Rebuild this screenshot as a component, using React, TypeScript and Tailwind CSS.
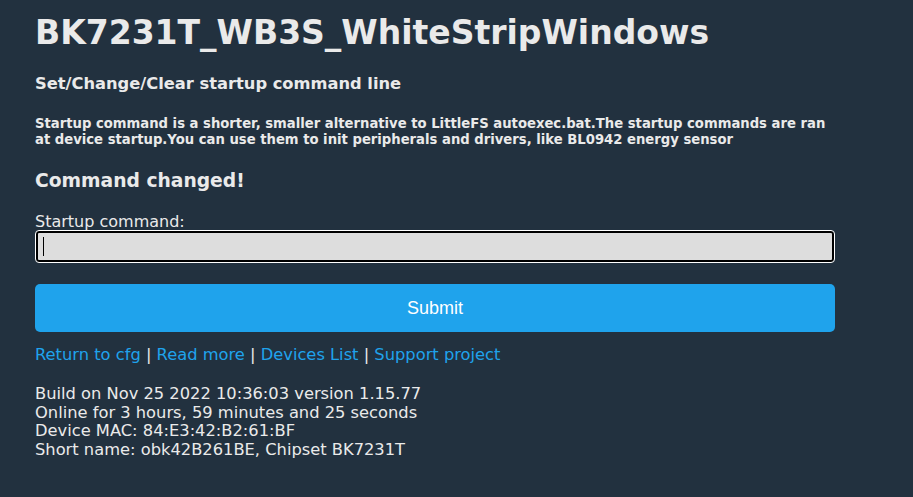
import React from "react";

const links = ["Return to cfg", "Read more", "Devices List", "Support project"];

const info = [
  "Build on Nov 25 2022 10:36:03 version 1.15.77",
  "Online for 3 hours, 59 minutes and 25 seconds",
  "Device MAC: 84:E3:42:B2:61:BF",
  "Short name: obk42B261BE, Chipset BK7231T",
];

export default function App() {
  return (
    <div className="min-h-[497px] w-full bg-[#22313f] text-[#eaeaea] font-['DejaVu_Sans',Verdana,sans-serif]">
      <div className="ml-[35px] w-[800px] pt-[13px] pb-8">
        <h1 className="text-[33px] font-bold leading-[40px]">BK7231T_WB3S_WhiteStripWindows</h1>
        <h4 className="mt-[21px] text-[16.3px] font-bold leading-[20px]">Set/Change/Clear startup command line</h4>
        <h5 className="mt-[22px] text-[13.2px] font-bold leading-[16px]">
          Startup command is a shorter, smaller alternative to LittleFS autoexec.bat.The startup commands are ran at
          device startup.You can use them to init peripherals and drivers, like BL0942 energy sensor
        </h5>
        <h3 className="mt-[21px] text-[18.72px] font-bold leading-[24px]">Command changed!</h3>

        {/* form */}
        <label className="mt-[20px] block text-[16px] leading-[17px]">Startup command:</label>
        <div className="mx-px mt-px flex h-[31px] items-center rounded-[3px] border-2 border-black bg-[#dddddd] px-[5px] outline outline-1 outline-white">
          <span className="h-[19px] w-px bg-black" />
        </div>
        <button className="mt-[22px] h-[48px] w-full rounded-[5px] bg-[#1fa3ec] text-[18px] text-white font-['Liberation_Sans',Arial,sans-serif]">
          Submit
        </button>

        <div className="mt-[13px] text-[16.3px] leading-[20px]">
          {links.map((l, i) => (
            <React.Fragment key={l}>
              {i > 0 && <span> | </span>}
              <a className="text-[#1fa3ec]">{l}</a>
            </React.Fragment>
          ))}
        </div>

        <div className="mt-[20px] text-[16.3px] leading-[18.67px]">
          {info.map((t) => (
            <div key={t}>{t}</div>
          ))}
        </div>
      </div>
    </div>
  );
}
